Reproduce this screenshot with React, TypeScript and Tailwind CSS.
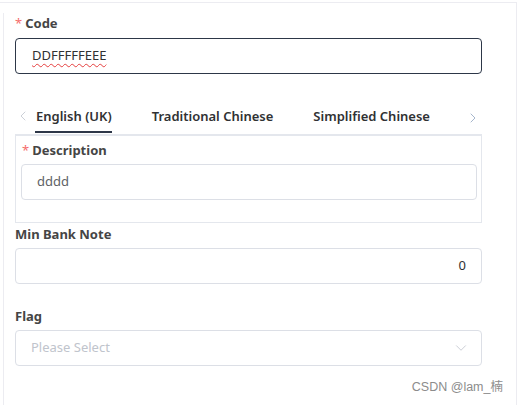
import { ChevronDown, ChevronLeft, ChevronRight } from 'lucide-react'

function Label({ text, required }: { text: string; required?: boolean }) {
  return (
    <div className="h-[20px] flex items-center text-[13px] font-bold leading-[20px] text-[#454545]">
      {required && <span className="text-[#f56c6c] mr-[3px] font-normal">*</span>}
      {text}
    </div>
  )
}

export default function App() {
  const tabs = ['English (UK)', 'Traditional Chinese', 'Simplified Chinese']

  return (
    <div
      className="w-[518px] h-[405px] bg-white pt-[2px] overflow-hidden relative"
      style={{ fontFamily: '"Noto Sans", "Noto Sans CJK SC", sans-serif' }}
    >
      <div className="w-[517px] h-[403px] border-t border-r border-[#ececf1] pt-[10px]">
        <div className="ml-[3px] h-full border-l border-[#ececf1] pl-[11px] w-[479px]">
          {/* Code */}
          <Label text="Code" required />
          <div className="mt-[5px] h-[36px] border border-[#2d3748] rounded-[4px] flex items-center px-[16px] text-[13px] text-[#303133]">
            <span className="underline decoration-wavy decoration-[#e53e3e] decoration-1 underline-offset-[3px]">
              DDFFFFFEEE
            </span>
          </div>

          {/* Tabs */}
          <div className="mt-[24px]">
            <div className="h-[36px] flex items-center relative">
              <ChevronLeft className="w-[16px] h-[16px] text-[#c8ccd4]" strokeWidth={1.4} />
              <div className="flex gap-[40px] ml-[5px] h-full">
                {tabs.map((t, i) => (
                  <div
                    key={t}
                    className="relative h-full flex items-center text-[13px] font-semibold text-[#303133] leading-none"
                  >
                    {t}
                    {i === 0 && <div className="absolute left-[-1px] right-0 bottom-[1px] h-[2px] bg-[#2d3748]" />}
                  </div>
                ))}
              </div>
              <ChevronRight
                className="w-[16px] h-[16px] text-[#9fb0c8] ml-auto mr-[1px] mt-[3px]"
                strokeWidth={1.4}
              />
            </div>
            <div className="border border-t-2 border-[#e4e7ed] pt-[4px] pl-[5px] pr-[4px] pb-[22px]">
              <div className="pl-[1px]">
                <Label text="Description" required />
              </div>
              <div className="mt-[4px] h-[36px] border border-[#dcdfe6] rounded-[4px] flex items-center px-[15px] text-[13px] text-[#606266]">
                dddd
              </div>
            </div>
          </div>

          {/* Min Bank Note */}
          <div className="mt-[1px]">
            <Label text="Min Bank Note" />
          </div>
          <div className="mt-[4px] h-[36px] border border-[#dcdfe6] rounded-[4px] flex items-center justify-end px-[15px] text-[13px] text-[#303133]">
            0
          </div>

          {/* Flag */}
          <div className="mt-[22px]">
            <Label text="Flag" />
          </div>
          <div className="mt-[4px] h-[36px] border border-[#dcdfe6] rounded-[4px] flex items-center px-[15px] text-[13px] text-[#c0c4cc]">
            <span>Please Select</span>
            <ChevronDown className="ml-auto w-[18px] h-[18px] text-[#c0c4cc] mr-[-4px]" strokeWidth={1.1} />
          </div>
        </div>
      </div>

      <div
        className="absolute right-[15px] bottom-[8px] text-[12.5px] text-[#8c8c8c]"
        style={{ fontFamily: '"Liberation Sans", "Noto Sans CJK SC", sans-serif' }}
      >
        CSDN @lam_楠
      </div>
    </div>
  )
}
